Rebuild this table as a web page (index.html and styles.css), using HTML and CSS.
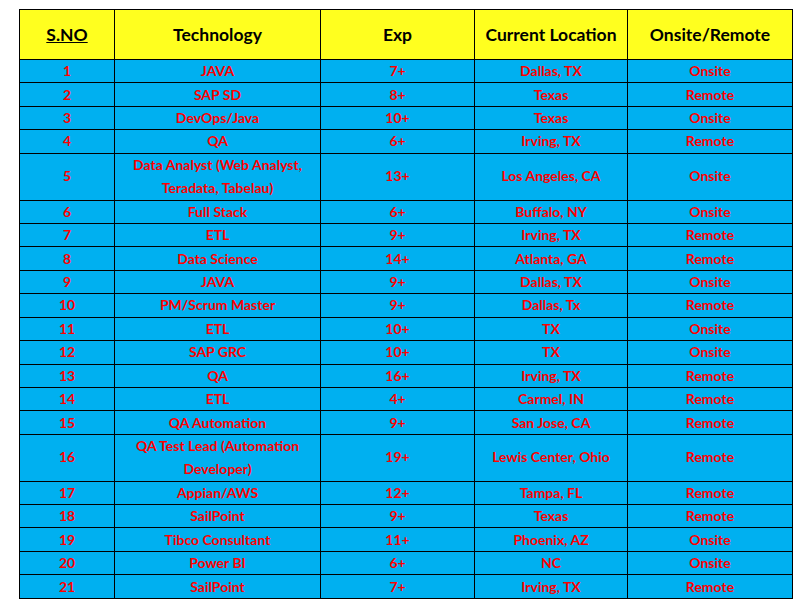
FILE: index.html
```html
<!DOCTYPE html>
<html>
<head>
<meta charset="utf-8">
<link rel="stylesheet" href="styles.css">
</head>
<body>
<table class="grid">
<colgroup>
<col class="c1"><col class="c2"><col class="c3"><col class="c4"><col class="c5">
</colgroup>
<thead>
<tr class="head"><th><u>S.NO</u></th><th>Technology</th><th>Exp</th><th>Current Location</th><th>Onsite/Remote</th></tr>
</thead>
<tbody>
<tr><td>1</td><td>JAVA</td><td>7+</td><td>Dallas, TX</td><td>Onsite</td></tr>
<tr><td>2</td><td>SAP SD</td><td>8+</td><td>Texas</td><td>Remote</td></tr>
<tr><td>3</td><td>DevOps/Java</td><td>10+</td><td>Texas</td><td>Onsite</td></tr>
<tr><td>4</td><td>QA</td><td>6+</td><td>Irving, TX</td><td>Remote</td></tr>
<tr class="dbl"><td>5</td><td>Data Analyst (Web Analyst,<br>Teradata, Tabelau)</td><td>13+</td><td>Los Angeles, CA</td><td>Onsite</td></tr>
<tr><td>6</td><td>Full Stack</td><td>6+</td><td>Buffalo, NY</td><td>Onsite</td></tr>
<tr><td>7</td><td>ETL</td><td>9+</td><td>Irving, TX</td><td>Remote</td></tr>
<tr><td>8</td><td>Data Science</td><td>14+</td><td>Atlanta, GA</td><td>Remote</td></tr>
<tr><td>9</td><td>JAVA</td><td>9+</td><td>Dallas, TX</td><td>Onsite</td></tr>
<tr><td>10</td><td>PM/Scrum Master</td><td>9+</td><td>Dallas, Tx</td><td>Remote</td></tr>
<tr><td>11</td><td>ETL</td><td>10+</td><td>TX</td><td>Onsite</td></tr>
<tr><td>12</td><td>SAP GRC</td><td>10+</td><td>TX</td><td>Onsite</td></tr>
<tr><td>13</td><td>QA</td><td>16+</td><td>Irving, TX</td><td>Remote</td></tr>
<tr><td>14</td><td>ETL</td><td>4+</td><td>Carmel, IN</td><td>Remote</td></tr>
<tr><td>15</td><td>QA Automation</td><td>9+</td><td>San Jose, CA</td><td>Remote</td></tr>
<tr class="dbl"><td>16</td><td>QA Test Lead (Automation<br>Developer)</td><td>19+</td><td>Lewis Center, Ohio</td><td>Remote</td></tr>
<tr><td>17</td><td>Appian/AWS</td><td>12+</td><td>Tampa, FL</td><td>Remote</td></tr>
<tr><td>18</td><td>SailPoint</td><td>9+</td><td>Texas</td><td>Remote</td></tr>
<tr><td>19</td><td>Tibco Consultant</td><td>11+</td><td>Phoenix, AZ</td><td>Onsite</td></tr>
<tr><td>20</td><td>Power BI</td><td>6+</td><td>NC</td><td>Onsite</td></tr>
<tr><td>21</td><td>SailPoint</td><td>7+</td><td>Irving, TX</td><td>Remote</td></tr>
</tbody>
</table>
</body>
</html>
```
FILE: styles.css
```css
html, body {
  margin: 0;
  padding: 0;
  background: #ffffff;
}
.grid {
  margin: 9px 0 0 19px;
  border-collapse: collapse;
  table-layout: fixed;
  width: 773px;
  font-family: Lato, "Liberation Sans", sans-serif;
  font-weight: bold;
}
.c1 { width: 95px; }
.c2 { width: 206px; }
.c3 { width: 154px; }
.c4 { width: 153px; }
.c5 { width: 165px; }
.grid th, .grid td {
  border: 1px solid #000000;
  padding: 0;
  text-align: center;
  vertical-align: middle;
}
.grid tr.head {
  height: 50px;
}
.head th {
  background: #ffff1f;
  color: #000000;
  font-size: 17.5px;
  font-weight: bold;
  line-height: 20px;
}
.grid tbody tr {
  height: 23.43px;
}
.grid tbody tr.dbl {
  height: 46.86px;
}
.grid td {
  background: #00b0f0;
  color: #ff0000;
  font-size: 14px;
  line-height: 16px;
}
.grid tr.dbl td {
  line-height: 22.5px;
}
```
